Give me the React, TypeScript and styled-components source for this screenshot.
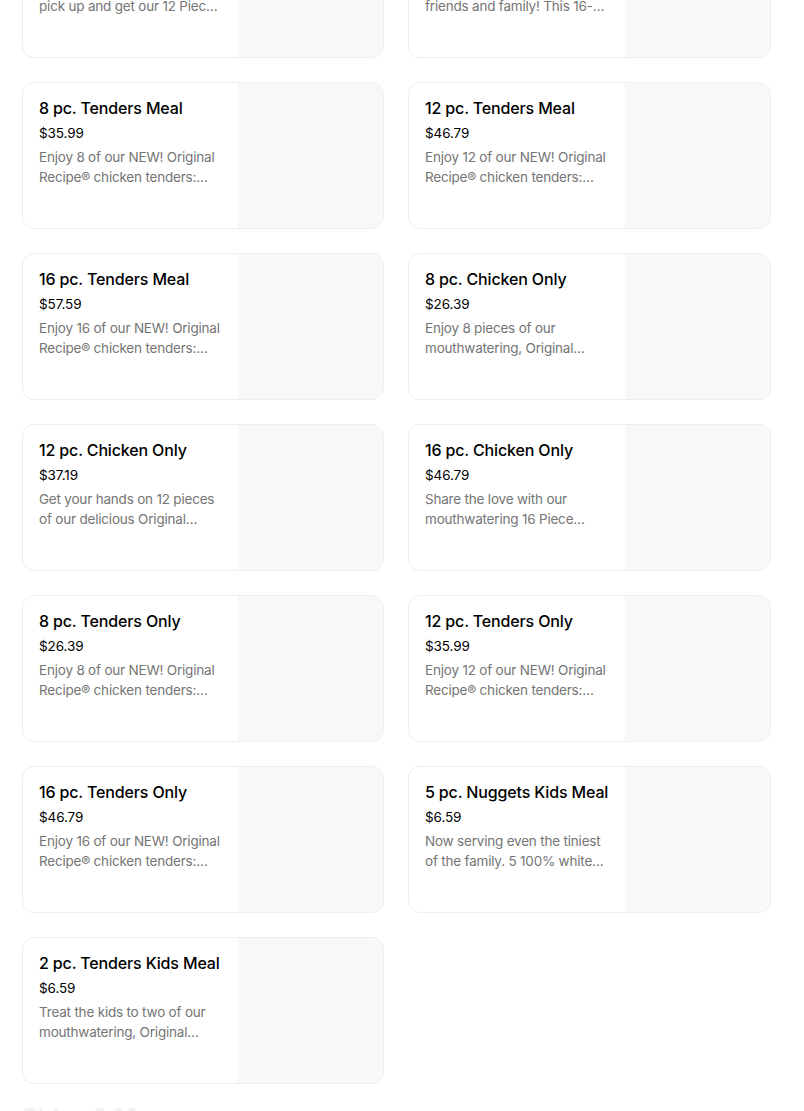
import React from "react";
import styled, { createGlobalStyle } from "styled-components";

const Global = createGlobalStyle`
  html, body { margin: 0; padding: 0; background: #ffffff; overflow: hidden; }
  body { font-family: Inter, "Noto Sans", sans-serif; color: #000; }
`;

const Page = styled.div`
  width: 804px;
  height: 1111px;
  overflow: hidden;
`;

const Section = styled.section`
  margin-top: -89px;
  padding-left: 22px;
`;

const Grid = styled.div`
  display: grid;
  grid-template-columns: 362px 363px;
  column-gap: 24px;
  row-gap: 24px;
`;

const Card = styled.div`
  box-sizing: border-box;
  height: 147px;
  display: flex;
  border: 1px solid #eeeeee;
  border-radius: 12px;
  overflow: hidden;
  background: #fff;
`;

const Info = styled.div`
  flex: 1 1 auto;
  min-width: 0;
  padding: 15px 14px 16px 16px;
  display: flex;
  flex-direction: column;
`;

const Title = styled.div`
  font-size: 16px;
  line-height: 20px;
  font-weight: 500;
  color: #000;
  white-space: nowrap;
  letter-spacing: -0.15px;
`;

const Price = styled.div`
  margin-top: 5px;
  font-size: 13.5px;
  line-height: 20px;
  color: #000;
  letter-spacing: -0.1px;
`;

const Desc = styled.div`
  margin-top: 4px;
  font-size: 13.5px;
  line-height: 20px;
  color: #757575;
  letter-spacing: -0.2px;
  display: -webkit-box;
  -webkit-line-clamp: 2;
  -webkit-box-orient: vertical;
  overflow: hidden;
`;

const Thumb = styled.div`
  flex: 0 0 145px;
  background: #f8f8f8;
`;

const NextHeading = styled.h2`
  margin: 18px 0 0 0;
  font-size: 24px;
  line-height: 32px;
  font-weight: 700;
  color: #f2f2f2;
`;

type Item = { title: string; price: string; desc: string };

const items: Item[] = [
  {
    title: "12 pc. Chicken Bucket",
    price: "$37.19",
    desc: "Order ahead for delivery or pick up and get our 12 Piece bucket of chicken.",
  },
  {
    title: "16 pc. Chicken Bucket",
    price: "$46.79",
    desc: "Feed the whole crew of friends and family! This 16-piece bucket of chicken.",
  },
  {
    title: "8 pc. Tenders Meal",
    price: "$35.99",
    desc: "Enjoy 8 of our NEW! Original Recipe® chicken tenders: hand-breaded and freshly prepared.",
  },
  {
    title: "12 pc. Tenders Meal",
    price: "$46.79",
    desc: "Enjoy 12 of our NEW! Original Recipe® chicken tenders: hand-breaded and freshly prepared.",
  },
  {
    title: "16 pc. Tenders Meal",
    price: "$57.59",
    desc: "Enjoy 16 of our NEW! Original Recipe® chicken tenders: hand-breaded and freshly prepared.",
  },
  {
    title: "8 pc. Chicken Only",
    price: "$26.39",
    desc: "Enjoy 8 pieces of our mouthwatering, Original Recipe® chicken.",
  },
  {
    title: "12 pc. Chicken Only",
    price: "$37.19",
    desc: "Get your hands on 12 pieces of our delicious Original Recipe® chicken.",
  },
  {
    title: "16 pc. Chicken Only",
    price: "$46.79",
    desc: "Share the love with our mouthwatering 16 Piece Original Recipe® chicken.",
  },
  {
    title: "8 pc. Tenders Only",
    price: "$26.39",
    desc: "Enjoy 8 of our NEW! Original Recipe® chicken tenders: hand-breaded and freshly prepared.",
  },
  {
    title: "12 pc. Tenders Only",
    price: "$35.99",
    desc: "Enjoy 12 of our NEW! Original Recipe® chicken tenders: hand-breaded and freshly prepared.",
  },
  {
    title: "16 pc. Tenders Only",
    price: "$46.79",
    desc: "Enjoy 16 of our NEW! Original Recipe® chicken tenders: hand-breaded and freshly prepared.",
  },
  {
    title: "5 pc. Nuggets Kids Meal",
    price: "$6.59",
    desc: "Now serving even the tiniest of the family. 5 100% white meat nuggets.",
  },
  {
    title: "2 pc. Tenders Kids Meal",
    price: "$6.59",
    desc: "Treat the kids to two of our mouthwatering, Original Recipe® tenders.",
  },
];

export default function App() {
  return (
    <Page>
      <Global />
      <Section>
        <Grid>
          {items.map((it) => (
            <Card key={it.title}>
              <Info>
                <Title>{it.title}</Title>
                <Price>{it.price}</Price>
                <Desc>{it.desc}</Desc>
              </Info>
              <Thumb />
            </Card>
          ))}
        </Grid>
        <NextHeading>Sides & More</NextHeading>
      </Section>
    </Page>
  );
}
